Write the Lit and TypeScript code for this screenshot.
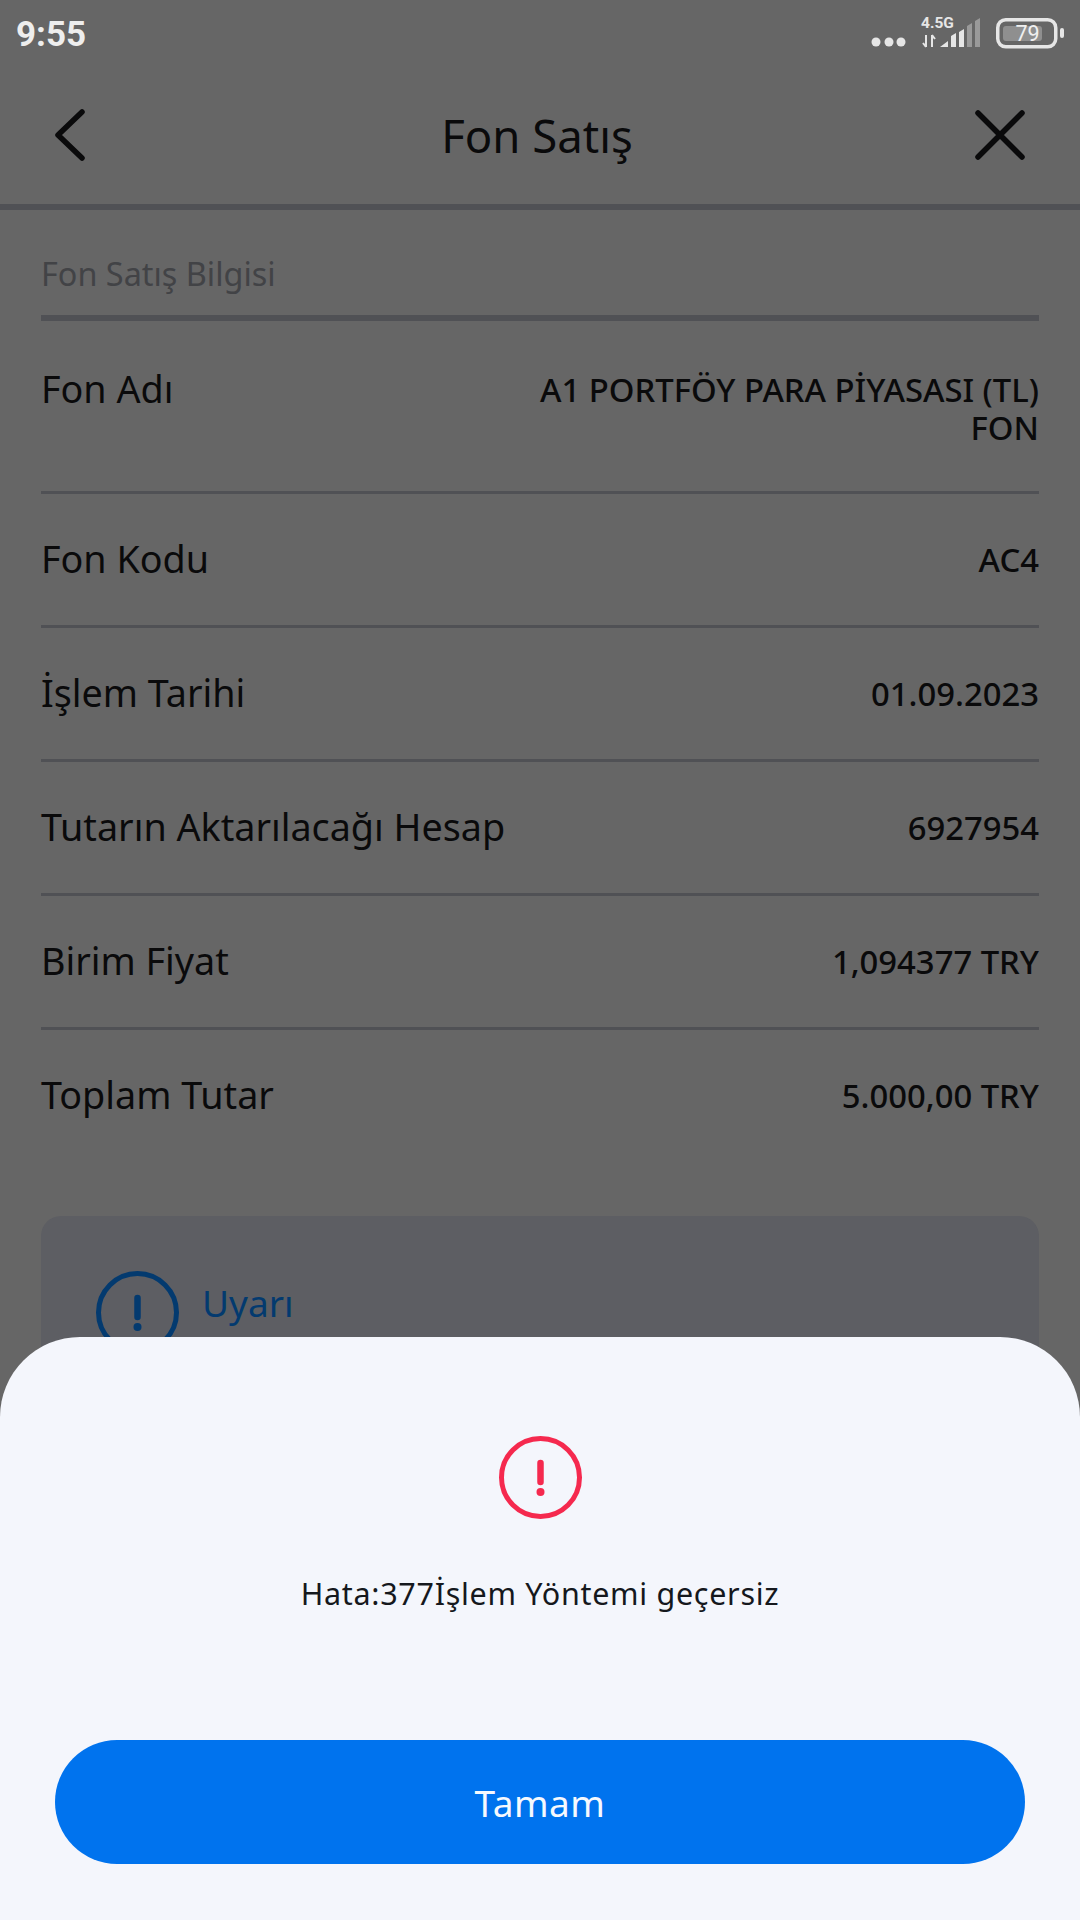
import { LitElement, html, css } from "lit";
import { customElement } from "lit/decorators.js";

const rows: [string, string[]][] = [
  ["Fon Adı", ["A1 PORTFÖY PARA PİYASASI (TL)", "FON"]],
  ["Fon Kodu", ["AC4"]],
  ["İşlem Tarihi", ["01.09.2023"]],
  ["Tutarın Aktarılacağı Hesap", ["6927954"]],
  ["Birim Fiyat", ["1,094377 TRY"]],
  ["Toplam Tutar", ["5.000,00 TRY"]],
];

@customElement("app-root")
export class AppRoot extends LitElement {
  static styles = css`
    :host { display: block; width: 1080px; height: 1920px; position: relative; overflow: hidden; background: #666666; font-family: "Noto Sans", "Open Sans", sans-serif; color: #0a0a0b; }
    .status { height: 60px; display: flex; align-items: center; justify-content: space-between; padding: 0 10px 0 16px; }
    .time { font-family: Roboto, sans-serif; font-weight: 700; font-size: 35px; color: #eeeeee; line-height: 1; margin-top: 8px; }
    .status svg { display: block; }
    .bar { height: 150px; box-sizing: border-box; display: flex; align-items: center; justify-content: space-between; padding: 6px 55px 0 52px; border-bottom: 6px solid #505155; }
    .bar h1 { margin: 2px 0 0 12px; font-size: 45.5px; font-weight: 400; line-height: 1; }
    .bar svg { display: block; }
    .content { padding: 0 41px; }
    .section { height: 111px; box-sizing: border-box; padding-top: 20px; display: flex; align-items: center; font-size: 32.4px; color: #424346; border-bottom: 6px solid #505155; }
    .row { display: flex; justify-content: space-between; align-items: flex-start; padding: 43px 0 44px; border-bottom: 3px solid #505155; font-size: 37.7px; line-height: 44px; }
    .row.multi { padding: 46px 0 44px; }
    .row.last { border-bottom: 0; }
    .value { text-align: right; font-size: 32.8px; font-weight: 500; line-height: 38px; margin-top: 4px; }
    .warn { margin-top: 55px; height: 400px; background: #5d5e63; border-radius: 20px; padding: 55px 55px; display: flex; gap: 23px; align-items: flex-start; box-sizing: border-box; color: #033a6f; font-size: 37px; }
    .warn span { line-height: 44px; margin-top: 10px; }
    .sheet { position: absolute; left: 0; right: 0; bottom: 0; height: 583px; background: #f4f6fc; border-radius: 80px 80px 0 0; display: flex; flex-direction: column; align-items: center; box-sizing: border-box; padding: 99px 55px 0; }
    .sheet svg { display: block; }
    .msg { margin-top: 54px; font-size: 30.5px; line-height: 40px; letter-spacing: 0.7px; color: #15181d; }
    .btn { margin-top: 127px; width: 970px; height: 124px; border-radius: 62px; background: #0073ee; color: #f6f9fe; font-size: 37px; display: flex; align-items: center; justify-content: center; letter-spacing: 0.5px; }
  `;

  render() {
    return html`
      <div class="status">
        <div class="time">9:55</div>
        <svg width="210" height="60" viewBox="860 0 210 60" fill="#e6e6e6">
          <circle cx="876" cy="42" r="4.500"/><circle cx="889" cy="42" r="4.500"/><circle cx="901" cy="42" r="4.500"/>
          <text x="921" y="28" font-family="Roboto, sans-serif" font-weight="700" font-size="15.500">4.5G</text>
          <path d="M926 35v12M923 43l3 4M932 47V35M932 35l3 4" stroke="#e6e6e6" stroke-width="2" fill="none"/>
          <path d="M940 47l8-6v6zM951 36l5-3v14h-5zM959 32l5-3v18h-5z"/>
          <path d="M967 26l5-3v24h-5zM975 21l5-3v29h-5z" fill="#999999"/>
          <rect x="1003" y="26" width="39" height="15" rx="3" fill="#8f8f8f"/>
          <rect x="997.750" y="19.750" width="58" height="27" rx="8" fill="none" stroke="#e6e6e6" stroke-width="3.500"/>
          <rect x="1060" y="28" width="4" height="10" rx="2"/>
          <text x="1027.500" y="41" text-anchor="middle" font-family="Roboto, sans-serif" font-size="21.500" fill="#efefef">79</text>
        </svg>
      </div>
      <div class="bar">
        <svg width="35" height="52" viewBox="0 0 35 52" fill="none" stroke="#0a0a0b" stroke-width="5.500" stroke-linecap="round" stroke-linejoin="round"><path d="M30 3 6 26l24 23"/></svg>
        <h1>Fon Satış</h1>
        <svg width="50" height="50" viewBox="0 0 50 50" fill="none" stroke="#0a0a0b" stroke-width="5.500" stroke-linecap="round"><path d="M3 3l44 44M47 3 3 47"/></svg>
      </div>
      <div class="content">
        <div class="section">Fon Satış Bilgisi</div>
        ${rows.map(([k, v], i) => html`
          <div class="row ${v.length > 1 ? "multi" : ""} ${i === rows.length - 1 ? "last" : ""}">
            <div>${k}</div>
            <div class="value">${v.map((l) => html`<div>${l}</div>`)}</div>
          </div>`)}
        <div class="warn">
          <svg width="83" height="83" viewBox="0 0 83 83" fill="none" stroke="#033a6f"><circle cx="41.500" cy="41.500" r="39" stroke-width="5"/><path d="M41.500 27v19" stroke-width="6.500" stroke-linecap="round"/><circle cx="41.500" cy="56" r="4" fill="#033a6f" stroke="none"/></svg>
          <span>Uyarı</span>
        </div>
      </div>
      <div class="sheet">
        <svg width="83" height="83" viewBox="0 0 83 83" fill="none" stroke="#f5294e"><circle cx="41.500" cy="41.500" r="39" stroke-width="5"/><path d="M41.500 27v19" stroke-width="6.500" stroke-linecap="round"/><circle cx="41.500" cy="56" r="4" fill="#f5294e" stroke="none"/></svg>
        <div class="msg">Hata:377İşlem Yöntemi geçersiz</div>
        <div class="btn">Tamam</div>
      </div>
    `;
  }
}
